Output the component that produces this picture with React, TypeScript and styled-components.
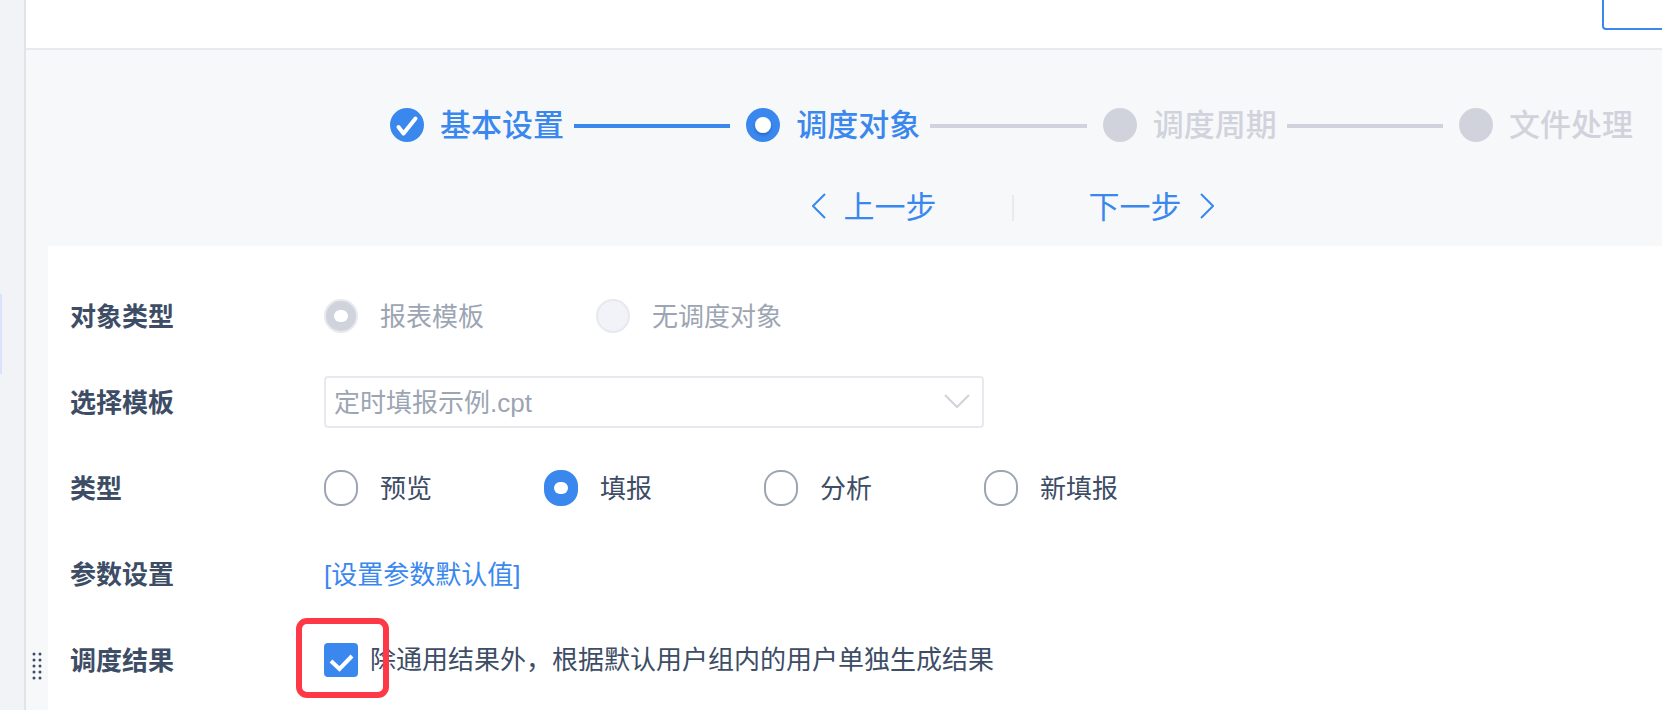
import React from 'react';
import styled, { createGlobalStyle } from 'styled-components';

const color = {
  blue: '#3a88ee',
  text: '#3d4d66',
  muted: '#9ca5b3',
  idle: '#d0d3dc',
  line: '#e8e9ee',
  ground: '#f7f8fa',
};

const GlobalStyle = createGlobalStyle`
  *, *::before, *::after { box-sizing: border-box; }
  body {
    margin: 0;
    background: ${color.ground};
    color: ${color.text};
    font-family: 'Liberation Sans', 'Noto Sans CJK SC', sans-serif;
    font-size: 26px;
    line-height: 36px;
    font-weight: 400;
  }
  button, input, select { font: inherit; color: inherit; margin: 0; }
`;

const Page = styled.div`
  display: flex;
  min-height: 100vh;
  overflow: hidden;
`;

const Sidebar = styled.aside`
  flex: none;
  width: 26px;
  padding-top: 294px;
  background: #f2f3f7;
  border-right: 2px solid #e1e3e8;
`;

const SidebarActive = styled.div`
  width: 2px;
  height: 80px;
  background: #d9e3fa;
`;

const Main = styled.main`
  flex: 1;
  min-width: 0;
  display: flex;
  flex-direction: column;
`;

const Header = styled.header`
  display: flex;
  justify-content: flex-end;
  align-items: flex-end;
  height: 50px;
  padding-bottom: 18px;
  overflow: hidden;
  background: #fff;
  border-bottom: 2px solid #e8eaed;
`;

const HeaderButton = styled.button`
  flex: none;
  width: 120px;
  height: 52px;
  margin-right: -60px;
  background: #fff;
  border: 2px solid ${color.blue};
  border-radius: 4px;
`;

const Wizard = styled.section`
  display: flex;
  flex-direction: column;
  gap: 39px;
  padding: 52px 29px 17px 364px;
  font-size: 31px;
  line-height: 42px;
`;

const Steps = styled.ol`
  display: flex;
  align-items: center;
  margin: 0;
  padding: 0;
  list-style: none;
`;

const Step = styled.li<{ $reached: boolean }>`
  flex: none;
  display: flex;
  align-items: center;
  gap: 16px;
  color: ${(p) => (p.$reached ? color.blue : color.idle)};
  font-weight: 500;
  white-space: nowrap;
`;

const StepName = styled.span`
  padding: 3px 0 1px;
`;

const StepLine = styled.li<{ $reached: boolean }>`
  flex: 1;
  height: 4px;
  margin: 2px 16px 0 10px;
  background: ${(p) => (p.$reached ? color.blue : color.idle)};
`;

const StepNav = styled.nav`
  display: flex;
  justify-content: center;
  align-items: center;
  gap: 75px;
  padding-left: 2px;
`;

const NavButton = styled.button`
  display: flex;
  align-items: center;
  gap: 18px;
  padding: 0;
  border: 0;
  background: none;
  color: ${color.blue};
  line-height: 42px;
  white-space: nowrap;
`;

const NavDivider = styled.span`
  width: 2px;
  height: 26px;
  background: #e8eaee;
`;

const Body = styled.div`
  flex: 1;
  display: flex;
`;

const Gutter = styled.div`
  flex: none;
  width: 22px;
  padding-top: 405px;
  padding-left: 6px;
`;

const DragHandle = styled.button`
  display: block;
  padding: 0;
  border: 0;
  background: none;
  svg { display: block; }
`;

const Form = styled.form`
  flex: 1;
  min-width: 0;
  display: flex;
  flex-direction: column;
  gap: 34px;
  padding: 44px 22px 24px;
  background: #fff;
`;

const Row = styled.div`
  display: flex;
  align-items: center;
  min-height: 52px;
`;

const RowLabel = styled.label`
  flex: none;
  width: 254px;
  padding-top: 2px;
  font-weight: 700;
`;

const Options = styled.div`
  display: flex;
  flex-wrap: wrap;
  gap: 16px 112px;
`;

const Option = styled.label<{ $disabled?: boolean }>`
  display: flex;
  align-items: center;
  gap: 22px;
  color: ${(p) => (p.$disabled ? color.muted : color.text)};
`;

const OptionText = styled.span`
  padding-top: 2px;
`;

const Radio = styled.input.attrs({ type: 'radio' })`
  appearance: none;
  display: grid;
  place-items: center;
  width: 34px;
  height: 36px;
  border: 2px solid ${color.muted};
  border-radius: 16px;
  background: #fff;
  &:checked { border-color: ${color.blue}; background: ${color.blue}; }
  &:disabled { height: 34px; border-color: ${color.line}; border-radius: 17px; background: #f2f3f8; }
  &:disabled:checked { background: ${color.idle}; }
  &:checked::before {
    content: '';
    width: 14px;
    height: 12px;
    border-radius: 6px;
    background: #fff;
  }
`;

const SelectBox = styled.div`
  display: grid;
  align-items: center;
  flex: 0 1 660px;
  & > * { grid-area: 1 / 1; }
  svg { justify-self: end; margin-right: 14px; pointer-events: none; }
`;

const Select = styled.select`
  appearance: none;
  width: 100%;
  height: 52px;
  padding: 2px 48px 0 8px;
  border: 2px solid ${color.line};
  border-radius: 4px;
  background: #fff;
  color: ${color.muted};
  opacity: 1;
`;

const TextLink = styled.a`
  padding-top: 2px;
  color: ${color.blue};
  text-decoration: none;
`;

const CheckLabel = styled.label`
  display: flex;
  align-items: center;
  gap: 12px;
`;

const CheckMark = styled.span`
  position: relative;
  display: grid;
  flex: none;
  & > * { grid-area: 1 / 1; }
  svg { pointer-events: none; }
`;

const Checkbox = styled.input.attrs({ type: 'checkbox' })`
  appearance: none;
  width: 34px;
  height: 34px;
  border: 2px solid ${color.muted};
  border-radius: 4px;
  & + svg { visibility: hidden; }
  &:checked { border-color: ${color.blue}; background: ${color.blue}; }
  &:checked + svg { visibility: visible; }
`;

const Highlight = styled.span`
  position: absolute;
  inset: -25px -31px -21px -28px;
  border: 6px solid #ff3847;
  border-radius: 11px;
  pointer-events: none;
`;

type StepState = 'done' | 'current' | 'waiting';

function StepIcon({ state }: { state: StepState }) {
  return (
    <svg width="34" height="34" viewBox="0 0 34 34" aria-hidden="true">
      <circle cx="17" cy="17" r="17" fill="currentColor" />
      {state === 'done' && (
        <path d="M8.5 19L13.5 25.5L25.5 10.5" fill="none" stroke="#fff" strokeWidth="4" strokeLinecap="round" strokeLinejoin="round" />
      )}
      {state === 'current' && (
        <>
          <defs>
            <filter id="dot-shadow" x="-50%" y="-50%" width="200%" height="200%">
              <feDropShadow dx="0" dy="2" stdDeviation="1.5" floodColor="#1c4f9c" floodOpacity="0.6" />
            </filter>
          </defs>
          <circle cx="17" cy="17" r="8" fill="#fff" filter="url(#dot-shadow)" />
        </>
      )}
    </svg>
  );
}

function Chevron({ points }: { points: string }) {
  return (
    <svg width="14" height="32" viewBox="0 0 14 32" aria-hidden="true">
      <polyline points={points} fill="none" stroke="currentColor" strokeWidth="2" />
    </svg>
  );
}

const steps: { name: string; state: StepState }[] = [
  { name: '基本设置', state: 'done' },
  { name: '调度对象', state: 'current' },
  { name: '调度周期', state: 'waiting' },
  { name: '文件处理', state: 'waiting' },
];

const objectTypes = ['报表模板', '无调度对象'];
const reportTypes = ['预览', '填报', '分析', '新填报'];

export default function App() {
  return (
    <>
      <GlobalStyle />
      <Page>
        <Sidebar>
          <SidebarActive />
        </Sidebar>
        <Main>
          <Header>
            <HeaderButton type="button" />
          </Header>
          <Wizard>
            <Steps>
              {steps.map((step, i) => (
                <React.Fragment key={step.name}>
                  {i > 0 && (
                    <StepLine $reached={step.state !== 'waiting'} aria-hidden="true" />
                  )}
                  <Step $reached={step.state !== 'waiting'}>
                    <StepIcon state={step.state} />
                    <StepName>{step.name}</StepName>
                  </Step>
                </React.Fragment>
              ))}
            </Steps>
            <StepNav>
              <NavButton type="button">
                <Chevron points="13,2 1,14 13,26" />
                上一步
              </NavButton>
              <NavDivider />
              <NavButton type="button">
                下一步
                <Chevron points="1,2 13,14 1,26" />
              </NavButton>
            </StepNav>
          </Wizard>
          <Body>
            <Gutter>
              <DragHandle type="button">
                <svg width="10" height="30" viewBox="0 0 10 30" fill={color.text} aria-hidden="true">
                  {[3, 9, 15, 21, 27].map((y) => (
                    <React.Fragment key={y}>
                      <circle cx="2" cy={y} r="1.5" />
                      <circle cx="8" cy={y} r="1.5" />
                    </React.Fragment>
                  ))}
                </svg>
              </DragHandle>
            </Gutter>
            <Form>
              <Row role="radiogroup" aria-labelledby="object-type">
                <RowLabel as="span" id="object-type">对象类型</RowLabel>
                <Options>
                  {objectTypes.map((name, i) => (
                    <Option key={name} $disabled>
                      <Radio name="objectType" disabled defaultChecked={i === 0} />
                      <OptionText>{name}</OptionText>
                    </Option>
                  ))}
                </Options>
              </Row>
              <Row>
                <RowLabel htmlFor="template">选择模板</RowLabel>
                <SelectBox>
                  <Select id="template" disabled>
                    <option>定时填报示例.cpt</option>
                  </Select>
                  <svg width="26" height="16" viewBox="0 0 26 16" aria-hidden="true">
                    <polyline points="1,1 13,13 25,1" fill="none" stroke={color.idle} strokeWidth="2" />
                  </svg>
                </SelectBox>
              </Row>
              <Row role="radiogroup" aria-labelledby="report-type">
                <RowLabel as="span" id="report-type">类型</RowLabel>
                <Options>
                  {reportTypes.map((name, i) => (
                    <Option key={name}>
                      <Radio name="reportType" defaultChecked={i === 1} />
                      <OptionText>{name}</OptionText>
                    </Option>
                  ))}
                </Options>
              </Row>
              <Row>
                <RowLabel as="span">参数设置</RowLabel>
                <TextLink href="#params">[设置参数默认值]</TextLink>
              </Row>
              <Row>
                <RowLabel as="span">调度结果</RowLabel>
                <CheckLabel>
                  <CheckMark>
                    <Checkbox defaultChecked />
                    <svg width="34" height="34" viewBox="0 0 34 34" aria-hidden="true">
                      <path d="M7 18L15.500 26L28 13" fill="none" stroke="#fff" strokeWidth="4" />
                    </svg>
                    <Highlight />
                  </CheckMark>
                  除通用结果外，根据默认用户组内的用户单独生成结果
                </CheckLabel>
              </Row>
            </Form>
          </Body>
        </Main>
      </Page>
    </>
  );
}
